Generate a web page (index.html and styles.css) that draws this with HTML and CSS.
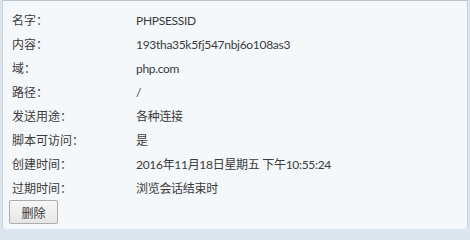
FILE: index.html
```html
<!DOCTYPE html>
<html lang="zh-CN">
<head>
<meta charset="utf-8">
<link rel="stylesheet" href="styles.css">
</head>
<body>
<div class="panel">
  <div class="rows">
    <div class="row"><span class="label">名字：</span><span class="value">PHPSESSID</span></div>
    <div class="row"><span class="label">内容：</span><span class="value">193tha35k5fj547nbj6o108as3</span></div>
    <div class="row"><span class="label">域：</span><span class="value">php.com</span></div>
    <div class="row"><span class="label">路径：</span><span class="value">/</span></div>
    <div class="row"><span class="label">发送用途：</span><span class="value">各种连接</span></div>
    <div class="row"><span class="label">脚本可访问：</span><span class="value">是</span></div>
    <div class="row"><span class="label">创建时间：</span><span class="value">2016年11月18日星期五 下午10:55:24</span></div>
    <div class="row"><span class="label">过期时间：</span><span class="value">浏览会话结束时</span></div>
  </div>
  <button class="btn" type="button">删除</button>
</div>
</body>
</html>
```
FILE: styles.css
```css
html, body {
  margin: 0;
  padding: 0;
  background: #dde5ee;
  width: 470px;
  height: 229px;
  overflow: hidden;
}
body {
  font-family: "Lato", "Noto Sans CJK SC", sans-serif;
  font-size: 12px;
  color: #3a3a3a;
}
.panel {
  box-sizing: border-box;
  margin-left: 2px;
  width: 466px;
  height: 229px;
  background: #f5f8fa;
  border-top: 1px solid #b9c3cc;
  border-left: 1px solid #c9d3dc;
  border-right: 1px solid #c9d3dc;
  border-radius: 0 0 3px 3px;
  padding: 8px 0 0 9px;
}
.rows {
  display: flex;
  flex-direction: column;
}
.row {
  display: flex;
  height: 24px;
  line-height: 24px;
}
.label {
  width: 124px;
  flex: none;
}
.value {
  letter-spacing: -0.3px;
}
.btn {
  display: block;
  margin-top: -1px;
  margin-left: -3px;
  width: 49px;
  height: 24px;
  padding: 0;
  font-family: inherit;
  font-size: 12px;
  color: #3a3a3a;
  background: linear-gradient(#f6f6f6, #e6e6e6);
  border: 1px solid #acacac;
  border-radius: 2px;
}
```
